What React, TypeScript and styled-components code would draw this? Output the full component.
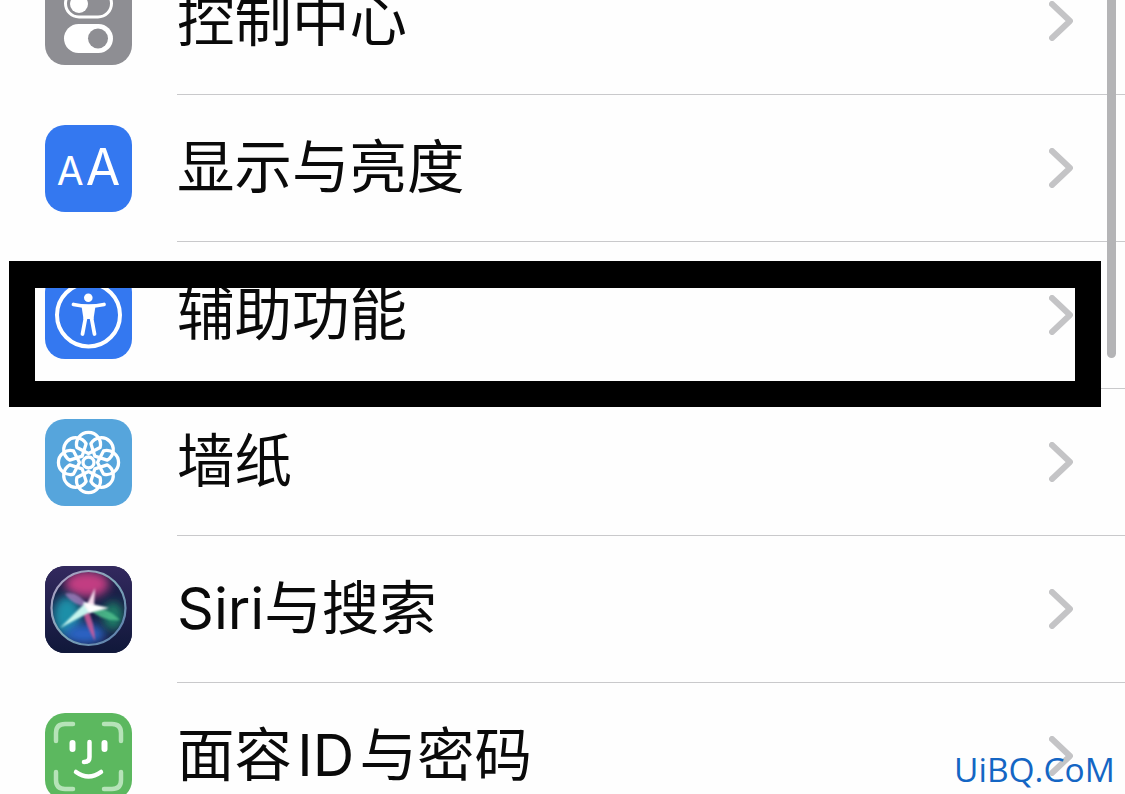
import styled, { createGlobalStyle } from "styled-components";
import type { ReactNode } from "react";

const GlobalStyle = createGlobalStyle`
  html, body {
    margin: 0;
    padding: 0;
    background: #fff;
  }
`;

const Screen = styled.div`
  position: relative;
  width: 1125px;
  height: 794px;
  overflow: hidden;
  background: #fefefe;
  font-family: Inter, "Noto Sans CJK SC", sans-serif;
`;

const List = styled.ul`
  list-style: none;
  margin: -52px 0 0;
  padding: 0;
`;

const Row = styled.li`
  display: flex;
  align-items: center;
  height: 147px;
  padding-left: 45px;
`;

const IconTile = styled.div<{ $bg: string }>`
  flex: none;
  display: flex;
  align-items: center;
  justify-content: center;
  width: 87px;
  height: 87px;
  border-radius: 20px;
  background: ${(p) => p.$bg};
  overflow: hidden;

  svg {
    display: block;
  }
`;

const RowBody = styled.div`
  flex: 1;
  align-self: stretch;
  display: flex;
  align-items: center;
  justify-content: space-between;
  margin-left: 45px;
  padding-right: 52px;
  border-bottom: 1px solid #c9c9cb;
`;

const Label = styled.span`
  font-size: 57.5px;
  line-height: 1;
  color: #0a0a0a;
  white-space: nowrap;
`;

const AaMark = styled.div`
  display: flex;
  align-items: baseline;
  gap: 2px;
  margin-top: -4px;
  color: #fff;
  font-family: Inter, sans-serif;
  font-weight: 400;
  line-height: 1;
`;

const AaLetter = styled.span<{ $size: number }>`
  font-size: ${(p) => p.$size}px;
`;

const Highlight = styled.div`
  position: absolute;
  left: 9px;
  top: 261px;
  width: 1092px;
  height: 146px;
  box-sizing: border-box;
  border-style: solid;
  border-color: #000;
  border-width: 27px 26px 26px;
`;

const ScrollThumb = styled.div`
  position: absolute;
  left: 1107px;
  top: -10px;
  width: 9px;
  height: 368px;
  border-radius: 5px;
  background: #b4b4b6;
`;

const Watermark = styled.div`
  position: absolute;
  left: 954px;
  top: 746px;
  font-family: "Open Sans", sans-serif;
  font-size: 33.5px;
  line-height: 46px;
  color: #1466c4;
  white-space: nowrap;
`;

const Chevron = () => (
  <svg width="24" height="40" viewBox="0 0 24 40" fill="none">
    <path d="M3 3 L21 20 L3 37" stroke="#c4c4c6" strokeWidth="6" strokeLinecap="round" strokeLinejoin="round" />
  </svg>
);

const ControlIcon = () => (
  <svg width="87" height="87" viewBox="0 0 87 87">
    <rect x="20.5" y="12" width="46" height="27" rx="13.5" fill="none" stroke="#fff" strokeWidth="3" />
    <circle cx="34" cy="26" r="9" fill="#fff" />
    <rect x="19" y="46" width="49" height="29" rx="14.5" fill="#fff" />
    <circle cx="53" cy="60.5" r="10" fill="#8e8e93" />
  </svg>
);

const AccessIcon = () => (
  <svg width="87" height="87" viewBox="0 0 87 87" fill="none">
    <circle cx="43.5" cy="43" r="31.5" stroke="#fff" strokeWidth="4" />
    <circle cx="43.3" cy="25.7" r="4.3" fill="#fff" />
    <path d="M36.5 34 H50.5 L48.5 47 H38.5 Z" fill="#fff" />
    <path
      d="M28.5 32.5 Q43.5 36 59 32.5 M40.5 46 L37.5 62 M46.5 46 L49.5 62"
      stroke="#fff"
      strokeWidth="3.8"
      strokeLinecap="round"
      strokeLinejoin="round"
    />
  </svg>
);

const FlowerIcon = () => {
  const angles = [0, 45, 90, 135, 180, 225, 270, 315];
  return (
    <svg width="87" height="87" viewBox="0 0 87 87" fill="none">
      <g transform="translate(43.5 43.5)" stroke="#fff" strokeWidth="3.3" strokeLinejoin="round">
        {angles.map((a) => (
          <path key={a} transform={`rotate(${a})`} d="M0 -9 L-11.6 -15 A12 12 0 1 1 11.6 -15 Z" />
        ))}
        <circle r="5.5" fill="#56a5dc" />
      </g>
    </svg>
  );
};

const SiriIcon = () => (
  <svg width="87" height="87" viewBox="0 0 87 87" fill="none">
    <defs>
      <linearGradient id="siriBg" x1="0" y1="0" x2="0" y2="1">
        <stop offset="0" stopColor="#33295e" />
        <stop offset="1" stopColor="#10183a" />
      </linearGradient>
      <linearGradient id="siriRing" x1="0" y1="0" x2="1" y2="1">
        <stop offset="0" stopColor="#b49dc4" />
        <stop offset="0.5" stopColor="#7fa8b8" />
        <stop offset="1" stopColor="#5878aa" />
      </linearGradient>
      <filter id="siriBlur" x="-40%" y="-40%" width="180%" height="180%">
        <feGaussianBlur stdDeviation="5" />
      </filter>
      <filter id="siriSoft" x="-30%" y="-30%" width="160%" height="160%">
        <feGaussianBlur stdDeviation="0.9" />
      </filter>
      <clipPath id="siriClip">
        <circle cx="43.5" cy="42" r="37" />
      </clipPath>
    </defs>
    <rect width="87" height="87" fill="url(#siriBg)" />
    <circle cx="43.5" cy="42" r="37" fill="#1a2048" />
    <g clipPath="url(#siriClip)">
      <ellipse cx="42" cy="18" rx="22" ry="13" fill="#c23c82" filter="url(#siriBlur)" />
      <ellipse cx="22" cy="50" rx="14" ry="20" fill="#1f8fa8" filter="url(#siriBlur)" />
      <ellipse cx="40" cy="68" rx="20" ry="10" fill="#2a63c4" filter="url(#siriBlur)" />
      <ellipse cx="68" cy="50" rx="10" ry="14" fill="#1c7f68" filter="url(#siriBlur)" />
      <path d="M20 28 Q32 24 44 41 Q28 40 20 28Z" fill="#a77fc0" opacity="0.75" filter="url(#siriSoft)" />
      <path d="M42 42 Q50 58 50 75 Q42 62 38 46Z" fill="#d15c9a" opacity="0.85" filter="url(#siriSoft)" />
      <path d="M44 41 Q62 40 75 54 Q58 56 44 43Z" fill="#4fbf8c" opacity="0.85" filter="url(#siriSoft)" />
      <path d="M15 62 L40 37 L47 45 Z" fill="#c6f5ee" filter="url(#siriSoft)" />
      <path d="M50 22 L49 40 L40 42 Z" fill="#f5d8ea" filter="url(#siriSoft)" />
      <path d="M38 36 L64 42 L44 47 Z" fill="#fff" filter="url(#siriSoft)" />
    </g>
    <circle cx="43.5" cy="42" r="37" stroke="url(#siriRing)" strokeWidth="2.2" />
  </svg>
);

const FaceIcon = () => (
  <svg width="87" height="87" viewBox="0 0 87 87" fill="none" strokeLinecap="round">
    <g stroke="#b6e3b8" strokeWidth="4.5">
      <path d="M11 28 V20 Q11 11 20 11 H28" />
      <path d="M59 11 H67 Q76 11 76 20 V28" />
      <path d="M11 59 V67 Q11 76 20 76 H28" />
      <path d="M59 76 H67 Q76 76 76 67 V59" />
    </g>
    <g stroke="#fff" strokeWidth="4.5">
      <path d="M27.5 30 V36" strokeWidth="6" />
      <path d="M59.5 30 V36" strokeWidth="6" />
      <path d="M44.5 29 V44 Q44.5 49 39 49" />
      <path d="M31 59 Q43.5 68 56 59" />
    </g>
  </svg>
);

const rows: { label: string; bg: string; icon: ReactNode }[] = [
  { label: "控制中心", bg: "#8e8e93", icon: <ControlIcon /> },
  {
    label: "显示与亮度",
    bg: "#3478f0",
    icon: (
      <AaMark>
        <AaLetter $size={39}>A</AaLetter>
        <AaLetter $size={50}>A</AaLetter>
      </AaMark>
    ),
  },
  { label: "辅助功能", bg: "#3478f0", icon: <AccessIcon /> },
  { label: "墙纸", bg: "#56a5dc", icon: <FlowerIcon /> },
  { label: "Siri与搜索", bg: "#1a1d44", icon: <SiriIcon /> },
  { label: "面容\u200AID\u200A与密码", bg: "#5cb85f", icon: <FaceIcon /> },
];

const App = () => {
  return (
    <>
      <GlobalStyle />
      <Screen>
        <List>
          {rows.map((row) => (
            <Row key={row.label}>
              <IconTile $bg={row.bg}>{row.icon}</IconTile>
              <RowBody>
                <Label>{row.label}</Label>
                <Chevron />
              </RowBody>
            </Row>
          ))}
        </List>
        <ScrollThumb />
        <Highlight />
        <Watermark>UiBQ.CoM</Watermark>
      </Screen>
    </>
  );
};

export default App;
